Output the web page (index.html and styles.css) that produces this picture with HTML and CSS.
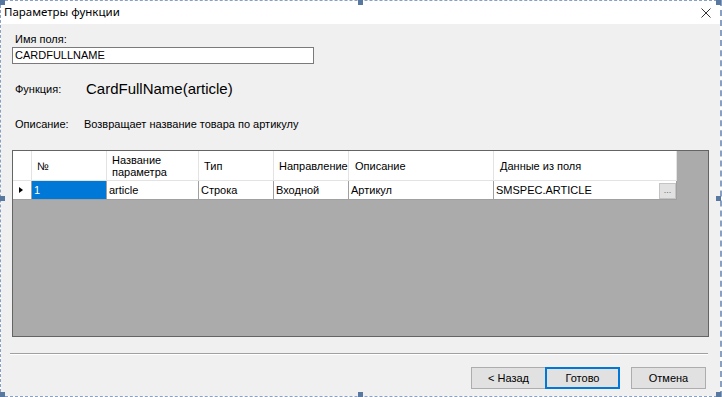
FILE: index.html
```html
<!DOCTYPE html>
<html lang="ru">
<head>
    <meta charset="UTF-8">
    <title>Параметры функции</title>
    <link rel="stylesheet" href="styles.css">
</head>
<body>
    <div class="designer">
        <div class="form">
            <div class="titlebar">
                <span class="title">Параметры функции</span>
                <svg class="close" width="10" height="10" viewBox="0 0 10 10">
                    <path d="M0.5 0.5 L9.5 9.5 M9.5 0.5 L0.5 9.5" stroke="#333" stroke-width="1" fill="none"/>
                </svg>
            </div>

            <div class="client">
                <div class="field-label">Имя поля:</div>
                <div class="textbox">CARDFULLNAME</div>

                <div class="info-row func-row">
                    <span class="info-label">Функция:</span>
                    <span class="func-name">CardFullName(article)</span>
                </div>
                <div class="info-row desc-row">
                    <span class="info-label">Описание:</span>
                    <span class="desc-text">Возвращает название товара по артикулу</span>
                </div>

                <div class="grid-view">
                    <div class="grid-table">
                        <div class="cell head row-head"></div>
                        <div class="cell head">№</div>
                        <div class="cell head">Название параметра</div>
                        <div class="cell head">Тип</div>
                        <div class="cell head">Направление</div>
                        <div class="cell head">Описание</div>
                        <div class="cell head">Данные из поля</div>

                        <div class="cell row-head"><span class="arrow"></span></div>
                        <div class="cell selected">1</div>
                        <div class="cell">article</div>
                        <div class="cell">Строка</div>
                        <div class="cell">Входной</div>
                        <div class="cell">Артикул</div>
                        <div class="cell data-cell">SMSPEC.ARTICLE<span class="dots">...</span></div>
                    </div>
                </div>

                <div class="separator"></div>

                <div class="buttons">
                    <button class="btn">&lt; Назад</button>
                    <button class="btn btn-default">Готово</button>
                    <button class="btn btn-cancel">Отмена</button>
                </div>
            </div>
        </div>

        <span class="handle h-tl"></span>
        <span class="handle h-tm"></span>
        <span class="handle h-tr"></span>
        <span class="handle h-ml"></span>
        <span class="handle h-mr"></span>
        <span class="handle h-bl"></span>
        <span class="handle h-bm"></span>
        <span class="handle h-br"></span>
    </div>
</body>
</html>
```

FILE: styles.css
```css
body {
    margin: 0;
    background-color: #ffffff;
    font-family: "Liberation Sans", Arial, sans-serif;
    font-size: 11px;
    color: #000;
}

.designer {
    position: relative;
    width: 722px;
    height: 397px;
    box-sizing: border-box;
    border: 1px dashed #8aa0c2;
    border-right-width: 2px;
}

.form {
    height: 100%;
    display: flex;
    flex-direction: column;
    background-color: #f0f0f0;
}

.titlebar {
    height: 23px;
    flex-shrink: 0;
    background-color: #fff;
    display: flex;
    align-items: center;
    justify-content: space-between;
    padding: 0 9px 0 3px;
}

.title {
    font-family: "Noto Sans", "Open Sans", sans-serif;
    font-size: 11.5px;
    color: #000;
    position: relative;
    top: -1px;
}

.client {
    padding: 9px 11px 0 11px;
    display: flex;
    flex-direction: column;
}

.field-label {
    padding-left: 3px;
    line-height: 13px;
}

.textbox {
    margin-top: 1px;
    width: 302px;
    height: 17px;
    box-sizing: border-box;
    border: 1px solid #7a7a7a;
    background-color: #fff;
    padding-left: 2px;
    line-height: 15px;
}

.info-row {
    display: flex;
    align-items: center;
    padding-left: 3px;
}

.info-label {
    width: 71px;
    flex-shrink: 0;
}

.func-row {
    height: 20px;
    margin-top: 15px;
}

.func-name {
    font-size: 15px;
    position: relative;
    top: -1px;
}

.desc-row {
    height: 14px;
    margin-top: 18px;
}

.desc-row .info-label {
    width: 69px;
}

.grid-view {
    margin-top: 19px;
    height: 187px;
    box-sizing: border-box;
    border: 1px solid #646464;
    background-color: #ababab;
}

.grid-table {
    display: grid;
    grid-template-columns: 19px 75px 92px 75px 75px 145px 183px;
    grid-template-rows: 30px 19px;
    width: 664px;
}

.cell {
    box-sizing: border-box;
    background-color: #fff;
    border-right: 1px solid #a0a0a0;
    border-bottom: 1px solid #a0a0a0;
    padding-left: 2px;
    display: flex;
    align-items: center;
    white-space: nowrap;
}

.cell.head {
    border-right-color: #e3e3e3;
    border-bottom-color: #e3e3e3;
    padding-left: 5px;
    white-space: normal;
    line-height: 12px;
}

.cell.head:nth-child(6),
.cell.head:nth-child(7) {
    padding-left: 6px;
}

.row-head {
    padding-left: 0;
    justify-content: center;
}

.arrow {
    width: 0;
    height: 0;
    border-top: 3px solid transparent;
    border-bottom: 3px solid transparent;
    border-left: 4px solid #000;
    margin-left: -3px;
}

.selected {
    background-color: #0078d7;
    color: #fff;
}

.data-cell {
    justify-content: space-between;
    padding-right: 0;
}

.dots {
    width: 17px;
    height: 16px;
    box-sizing: border-box;
    background-color: #e1e1e1;
    border: 1px solid #c4c4c4;
    color: #6d6d6d;
    font-size: 9px;
    text-align: center;
    line-height: 13px;
    margin-top: 1px;
}

.separator {
    margin: 16px 1px 0 -2px;
    height: 2px;
    box-sizing: border-box;
    border-top: 1px solid #a0a0a0;
    border-bottom: 1px solid #fff;
}

.buttons {
    display: flex;
    justify-content: flex-end;
    margin-top: 12px;
    padding-right: 3px;
}

.btn {
    width: 75px;
    height: 22px;
    box-sizing: border-box;
    background-color: #e1e1e1;
    border: 1px solid #adadad;
    font-family: "Liberation Sans", Arial, sans-serif;
    font-size: 11px;
    color: #000;
    padding: 0;
    margin: 0;
}

.btn-default {
    border: 2px solid #0078d7;
    margin-left: -1px;
}

.btn-cancel {
    margin-left: 11px;
}

.handle {
    position: absolute;
    width: 5px;
    height: 5px;
    background-color: #58789f;
}

.h-tl { left: -1px; top: -1px; }
.h-tm { left: 357px; top: -1px; }
.h-tr { right: -1px; top: -1px; }
.h-ml { left: -1px; top: 195px; }
.h-mr { right: -1px; top: 195px; }
.h-bl { left: -1px; bottom: -1px; }
.h-bm { left: 357px; bottom: -1px; }
.h-br { right: -1px; bottom: -1px; }
```
